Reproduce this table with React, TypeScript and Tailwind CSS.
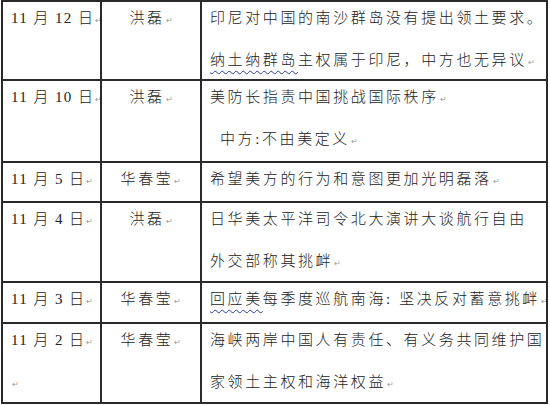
import type { ReactNode } from 'react';

const FONT = "font-['Liberation_Serif','Noto_Sans_CJK_SC',serif]";

function Mark() {
  return (
    <span className="ml-[1px] inline-block align-baseline font-['DejaVu_Sans'] text-[8px] leading-none tracking-normal text-[#9a9a9a]">
      ↵
    </span>
  );
}

function Wavy({ children }: { children: ReactNode }) {
  return (
    <span className="underline decoration-[#2b3aa8] decoration-wavy decoration-1 underline-offset-[5px]">
      {children}
    </span>
  );
}

interface Row {
  date: string;
  extraDateLine?: boolean;
  who: string;
  lines: ReactNode[];
  height: string;
}

const ROWS: Row[] = [
  {
    date: '11 月 12 日',
    who: '洪磊',
    height: 'h-[79px]',
    lines: [
      '印尼对中国的南沙群岛没有提出领土要求。',
      <>
        <Wavy>纳土纳群岛</Wavy>主权属于印尼，中方也无异议<Mark />
      </>,
    ],
  },
  {
    date: '11 月 10 日',
    who: '洪磊',
    height: 'h-[82px]',
    lines: [
      <>美防长指责中国挑战国际秩序<Mark /></>,
      <span className="pl-[10px]">中方:不由美定义<Mark /></span>,
    ],
  },
  {
    date: '11 月 5 日',
    who: '华春莹',
    height: 'h-[40px]',
    lines: [<>希望美方的行为和意图更加光明磊落<Mark /></>],
  },
  {
    date: '11 月 4 日',
    who: '洪磊',
    height: 'h-[80px]',
    lines: ['日华美太平洋司令北大演讲大谈航行自由', <>外交部称其挑衅<Mark /></>],
  },
  {
    date: '11 月 3 日',
    who: '华春莹',
    height: 'h-[41px]',
    lines: [
      <>
        <Wavy>回应美</Wavy>每季度巡航南海: 坚决反对蓄意挑衅<Mark />
      </>,
    ],
  },
  {
    date: '11 月 2 日',
    extraDateLine: true,
    who: '华春莹',
    height: 'h-[80px]',
    lines: ['海峡两岸中国人有责任、有义务共同维护国', <>家领土主权和海洋权益<Mark /></>],
  },
];

export default function App() {
  return (
    <div className={`h-[405px] w-[550px] overflow-hidden bg-white pl-[1px] ${FONT}`}>
      <div className="w-[547px] border-l-2 border-t-2 border-[#2a2a2a] text-[15px] font-light text-[#222]">
        {ROWS.map((row) => (
          <div key={row.date} className={`flex ${row.height}`}>
            <div className="w-[99px] shrink-0 overflow-hidden border-r-2 border-b-2 border-[#2a2a2a] px-[8px] whitespace-pre tracking-[1.4px]">
              <div className="-mt-[5px] leading-[42px]">
                {row.date}
                <Mark />
                {row.extraDateLine && (
                  <div>
                    <Mark />
                  </div>
                )}
              </div>
            </div>
            <div className="w-[100px] shrink-0 overflow-hidden border-r-2 border-b-2 border-[#2a2a2a] text-center whitespace-nowrap tracking-[2.6px]">
              <div className="-mt-[5px] leading-[42px]">
                {row.who}
                <Mark />
              </div>
            </div>
            <div className="min-w-0 flex-1 overflow-hidden border-r-2 border-b-2 border-[#2a2a2a] px-[8px] whitespace-nowrap tracking-[2.6px]">
              <div className="-mt-[5px] leading-[42px]">
                {row.lines.map((line, i) => (
                  <div key={i}>{line}</div>
                ))}
              </div>
            </div>
          </div>
        ))}
      </div>
    </div>
  );
}
